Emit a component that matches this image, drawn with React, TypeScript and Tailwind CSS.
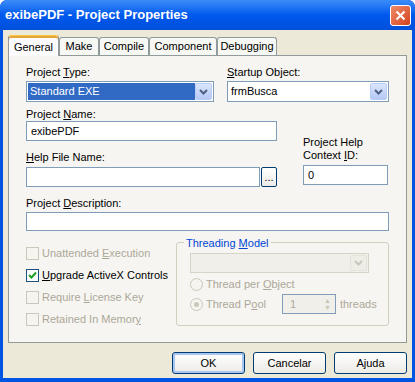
import React from "react";

const font = { fontFamily: '"Liberation Sans", Arial, sans-serif' };

function U({ children }: { children: React.ReactNode }) {
  return <span className="underline underline-offset-[1px]">{children}</span>;
}

function Arrow({ disabled }: { disabled?: boolean }) {
  return (
    <div
      className={
        "flex h-full w-[17px] items-center justify-center rounded-[2px] border " +
        (disabled
          ? "border-[#E4E3DC] bg-[#EEEDE6]"
          : "border-[#B9CCF6] bg-gradient-to-b from-[#DCE6FC] to-[#B5C9F5]")
      }
    >
      <svg width="9" height="6" viewBox="0 0 9 6">
        <path
          d="M1 1 L4.5 4.5 L8 1"
          fill="none"
          stroke={disabled ? "#C9C7BA" : "#4D6185"}
          strokeWidth="2"
        />
      </svg>
    </div>
  );
}

function Check({
  label,
  checked,
  disabled,
}: {
  label: React.ReactNode;
  checked?: boolean;
  disabled?: boolean;
}) {
  return (
    <div className="flex h-[13px] items-center whitespace-nowrap">
      <div
        className={
          "flex h-[13px] w-[13px] shrink-0 items-center justify-center border " +
          (disabled ? "border-[#CAC8BB] bg-[#F5F4EF]" : "border-[#1C5180] bg-white")
        }
      >
        {checked && (
          <svg width="9" height="9" viewBox="0 0 9 9">
            <path d="M1 4 L3.5 6.5 L8 1.5" fill="none" stroke="#21A121" strokeWidth="2" />
          </svg>
        )}
      </div>
      <span className={"ml-[3px] " + (disabled ? "text-[#ACA899]" : "text-black")}>{label}</span>
    </div>
  );
}

function Radio({ label, dot }: { label: React.ReactNode; dot?: boolean }) {
  return (
    <div className="flex h-[13px] shrink-0 items-center whitespace-nowrap">
      <div className="flex h-[13px] w-[13px] shrink-0 items-center justify-center rounded-full border border-[#CAC8BB] bg-[#F5F4EF]">
        {dot && <div className="h-[5px] w-[5px] rounded-full bg-[#CAC8BB]" />}
      </div>
      <span className="ml-[3px] text-[#ACA899]">{label}</span>
    </div>
  );
}

function Button({ label, focus }: { label: string; focus?: boolean }) {
  return (
    <div
      className={
        "flex h-[22px] w-[73px] items-center justify-center rounded-[3px] border border-[#003C74] bg-gradient-to-b from-white to-[#ECEBE6] " +
        (focus ? "shadow-[inset_0_0_0_2px_#A9C6F3]" : "")
      }
    >
      {label}
    </div>
  );
}

export default function App() {
  return (
    <div className="h-[382px] w-[415px] overflow-hidden text-[11px] text-black" style={font}>
      <div className="flex h-full flex-col rounded-t-[7px] bg-[#0054E3]">
        {/* title bar */}
        <div className="flex h-[30px] shrink-0 items-center rounded-t-[7px] bg-gradient-to-b from-[#3A8CF8] via-[#0058EE] to-[#0050DA] pl-[5px] pr-[4px]">
          <span className="text-[13px] font-bold text-white">exibePDF - Project Properties</span>
          <div className="ml-auto flex h-[21px] w-[21px] items-center justify-center rounded-[3px] border border-white bg-gradient-to-br from-[#F08A68] to-[#D2401A]">
            <svg width="11" height="11" viewBox="0 0 11 11">
              <path d="M1.5 1.5 L9.5 9.5 M9.5 1.5 L1.5 9.5" stroke="white" strokeWidth="2" />
            </svg>
          </div>
        </div>

        {/* body */}
        <div className="mx-[3px] mb-[4px] flex flex-1 flex-col bg-[#ECE9D8] pl-[5px] pr-[5px] pt-[4px]">
          {/* tabs */}
          <div className="flex h-[21px] items-end">
            <div className="relative z-10 -mb-px flex h-[21px] w-[51px] items-start justify-center rounded-t-[3px] border border-b-0 border-[#919B9C] border-t-[#FFC83C] bg-[#FCFCFE] pt-[3px] shadow-[inset_0_2px_0_#E6A53A]">
              General
            </div>
            <div className="flex h-[18px] w-[40px] items-center justify-center rounded-t-[3px] border border-b-0 border-[#919B9C] bg-[#F7F7F3]">
              Make
            </div>
            <div className="flex h-[18px] w-[50px] items-center justify-center rounded-t-[3px] border border-b-0 border-[#919B9C] bg-[#F7F7F3]">
              Compile
            </div>
            <div className="flex h-[18px] w-[68px] items-center justify-center rounded-t-[3px] border border-b-0 border-[#919B9C] bg-[#F7F7F3]">
              Component
            </div>
            <div className="flex h-[18px] w-[60px] items-center justify-center rounded-t-[3px] border border-b-0 border-[#919B9C] bg-[#F7F7F3]">
              Debugging
            </div>
          </div>

          {/* page */}
          <div className="flex h-[288px] flex-col border border-[#919B9C] bg-[#F6F5F1] pl-[17px] pt-[8px]">
            <div className="flex">
              <div className="w-[188px]">
                <div className="h-[17px]">
                  Project <U>T</U>ype:
                </div>
                <div className="flex h-[21px] items-center border border-[#7F9DB9] bg-white p-[1px]">
                  <div className="flex h-full flex-1 items-center bg-[#316AC5] pl-[2px] text-white">
                    Standard EXE
                  </div>
                  <Arrow />
                </div>
              </div>
              <div className="ml-[13px] w-[162px]">
                <div className="h-[17px]">
                  <U>S</U>tartup Object:
                </div>
                <div className="flex h-[21px] items-center border border-[#7F9DB9] bg-white p-[1px]">
                  <div className="flex-1 pl-[2px]">frmBusca</div>
                  <Arrow />
                </div>
              </div>
            </div>

            <div className="mt-[4px] flex">
              <div className="w-[251px]">
                <div className="h-[15px]">
                  Project <U>N</U>ame:
                </div>
                <div className="flex h-[20px] items-center border border-[#7F9DB9] bg-white pl-[4px]">
                  exibePDF
                </div>
                <div className="mt-[8px] h-[18px]">
                  <U>H</U>elp File Name:
                </div>
                <div className="flex">
                  <div className="h-[20px] w-[234px] border border-[#7F9DB9] bg-white" />
                  <div className="ml-[1px] flex h-[20px] w-[16px] items-end justify-center rounded-[2px] border border-[#003C74] bg-gradient-to-b from-white to-[#ECEBE6] pb-[3px] leading-none">
                    ...
                  </div>
                </div>
              </div>
              <div className="ml-[26px] flex w-[85px] flex-col justify-end">
                <div className="mb-[3px] leading-[13px]">
                  Project Help
                  <br />
                  Context <U>I</U>D:
                </div>
                <div className="mb-[2px] flex h-[20px] items-center border border-[#7F9DB9] bg-white pl-[4px]">
                  0
                </div>
              </div>
            </div>

            <div className="mt-[8px] h-[17px]">
              Project <U>D</U>escription:
            </div>
            <div className="h-[19px] w-[363px] border border-[#7F9DB9] bg-white" />

            <div className="mt-[7px] flex">
              <div className="flex w-[150px] flex-col gap-[9px] pt-[9px]">
                <Check label={<>Unattended <U>E</U>xecution</>} disabled />
                <Check label={<><U>U</U>pgrade ActiveX Controls</>} checked />
                <Check label={<>Require <U>L</U>icense Key</>} disabled />
                <Check label={<>Retained In Memor<U>y</U></>} disabled />
              </div>
              <div className="relative mt-[4px] h-[84px] w-[213px] rounded-[3px] border border-[#D0D0BF] pl-[13px] pt-[10px]">
                <span className="absolute -top-[8px] left-[7px] bg-[#F6F5F1] px-[2px] text-[#0046D5]">
                  Threading <U>M</U>odel
                </span>
                <div className="flex h-[20px] w-[179px] border border-[#D6D4C8] bg-[#F0EFEA] p-[1px]">
                  <div className="flex-1" />
                  <Arrow disabled />
                </div>
                <div className="mt-[5px]">
                  <Radio label={<>Thread per <U>O</U>bject</>} />
                </div>
                <div className="mt-[3px] flex items-center">
                  <Radio label={<>Thread P<U>o</U>ol</>} dot />
                  <div className="ml-[16px] flex h-[20px] w-[54px] shrink-0 items-center border border-[#7F9DB9] bg-[#F0EFEA] pl-[7px] text-[#ACA899]">
                    <span className="flex-1">1</span>
                    <div className="mr-[1px] flex h-[16px] w-[13px] flex-col items-center justify-center text-[7px] leading-[7px] text-[#C9C7BA]">
                      <span>▲</span>
                      <span>▼</span>
                    </div>
                  </div>
                  <span className="ml-[4px] whitespace-nowrap text-[#ACA899]">threads</span>
                </div>
              </div>
            </div>
          </div>

          {/* buttons */}
          <div className="mt-[9px] flex justify-end gap-[8px]">
            <Button label="OK" focus />
            <Button label="Cancelar" />
            <Button label="Ajuda" />
          </div>
        </div>
      </div>
    </div>
  );
}
